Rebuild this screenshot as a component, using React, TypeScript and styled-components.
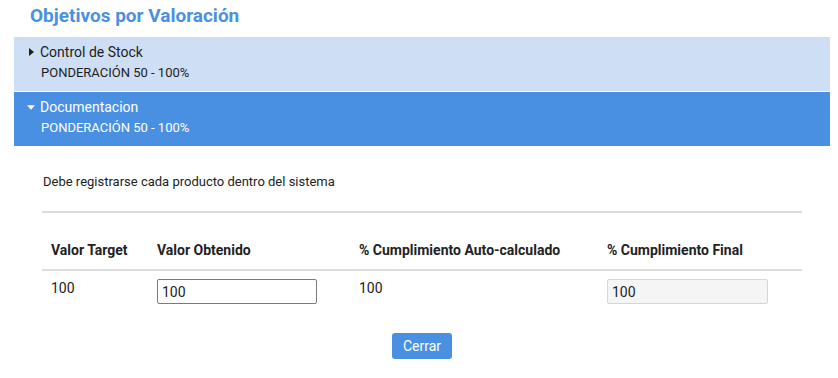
import styled, { createGlobalStyle } from 'styled-components';

const GlobalStyle = createGlobalStyle`
  body {
    margin: 0;
    background: #ffffff;
    font-family: Roboto, "Liberation Sans", Arial, sans-serif;
    color: #222;
  }
`;

const Page = styled.div`
  width: 838px;
  padding: 0 8px 0 14px;
  box-sizing: border-box;
`;

const Title = styled.h2`
  margin: 0;
  padding: 6px 0 0 16px;
  height: 37px;
  box-sizing: border-box;
  font-size: 19px;
  line-height: 20px;
  font-weight: 700;
  color: #4a90e2;
`;

const PanelHeader = styled.div<{ $open?: boolean }>`
  display: flex;
  flex-direction: column;
  height: 54px;
  box-sizing: border-box;
  padding: 5px 0 0 13px;
  margin-bottom: 1px;
  background: ${(p) => (p.$open ? '#4a90e2' : '#cedff5')};
  color: ${(p) => (p.$open ? '#ffffff' : '#1d1d1d')};
`;

const PanelTitle = styled.div`
  display: flex;
  align-items: center;
  gap: 5px;
  font-size: 14px;
  line-height: 20px;
`;

const Caret = styled.span`
  display: inline-flex;
  width: 8px;
  justify-content: center;
`;

const PanelSub = styled.div`
  padding-left: 14px;
  margin-top: 1px;
  font-size: 13px;
  line-height: 20px;
`;

const Body = styled.div`
  padding: 26px 28px 0 28px;
`;

const Description = styled.p`
  margin: 0 0 0 1px;
  font-size: 13px;
  line-height: 18px;
  color: #222;
`;

const Rule = styled.hr`
  margin: 20px 0 0;
  border: 0;
  height: 2px;
  background: #dddddd;
`;

const Table = styled.table`
  width: 760px;
  margin-top: 24px;
  border-collapse: collapse;
  table-layout: fixed;
`;

const Th = styled.th<{ $w: number }>`
  width: ${(p) => p.$w - 18}px;
  text-align: left;
  padding: 5px 9px 10px;
  font-size: 14px;
  line-height: 17px;
  font-weight: 700;
  color: #222;
  border-bottom: 2px solid #dddddd;
`;

const Td = styled.td`
  vertical-align: top;
  padding: 9px 9px 0;
  font-size: 14px;
  line-height: 17px;
  color: #222;
`;

const NumInput = styled.input<{ $disabled?: boolean }>`
  display: block;
  margin-top: -1px;
  width: ${(p) => (p.$disabled ? 161 : 160)}px;
  height: 25px;
  box-sizing: border-box;
  padding: 0 4px;
  font-family: inherit;
  font-size: 14px;
  color: #222;
  border: 1px solid ${(p) => (p.$disabled ? '#d6d6d6' : '#7a7a7a')};
  border-radius: 2px;
  background: ${(p) => (p.$disabled ? '#f5f5f5' : '#ffffff')};
  outline: none;
`;

const Actions = styled.div`
  display: flex;
  justify-content: center;
  margin-top: 29px;
`;

const Button = styled.button`
  width: 60px;
  height: 26px;
  border: 0;
  border-radius: 3px;
  background: #4a90e2;
  color: #ffffff;
  font-family: inherit;
  font-size: 14px;
  cursor: pointer;
`;

const CaretRight = () => (
  <svg width="5" height="8" viewBox="0 0 5 8">
    <path d="M0 0 L5 4 L0 8 Z" fill="currentColor" />
  </svg>
);

const CaretDown = () => (
  <svg width="9" height="5" viewBox="0 0 9 5">
    <path d="M0 0 L9 0 L4.5 5 Z" fill="currentColor" />
  </svg>
);

export default function App() {
  return (
    <Page>
      <GlobalStyle />
      <Title>Objetivos por Valoración</Title>
      <PanelHeader>
        <PanelTitle>
          <Caret>
            <CaretRight />
          </Caret>
          Control de Stock
        </PanelTitle>
        <PanelSub>PONDERACIÓN 50 - 100%</PanelSub>
      </PanelHeader>
      <PanelHeader $open>
        <PanelTitle>
          <Caret>
            <CaretDown />
          </Caret>
          Documentacion
        </PanelTitle>
        <PanelSub>PONDERACIÓN 50 - 100%</PanelSub>
      </PanelHeader>
      <Body>
        <Description>Debe registrarse cada producto dentro del sistema</Description>
        <Rule />
        <Table>
          <thead>
            <tr>
              <Th $w={106}>Valor Target</Th>
              <Th $w={202}>Valor Obtenido</Th>
              <Th $w={248}>% Cumplimiento Auto-calculado</Th>
              <Th $w={204}>% Cumplimiento Final</Th>
            </tr>
          </thead>
          <tbody>
            <tr>
              <Td>100</Td>
              <Td>
                <NumInput defaultValue="100" />
              </Td>
              <Td>100</Td>
              <Td>
                <NumInput $disabled disabled defaultValue="100" />
              </Td>
            </tr>
          </tbody>
        </Table>
        <Actions>
          <Button>Cerrar</Button>
        </Actions>
      </Body>
    </Page>
  );
}
